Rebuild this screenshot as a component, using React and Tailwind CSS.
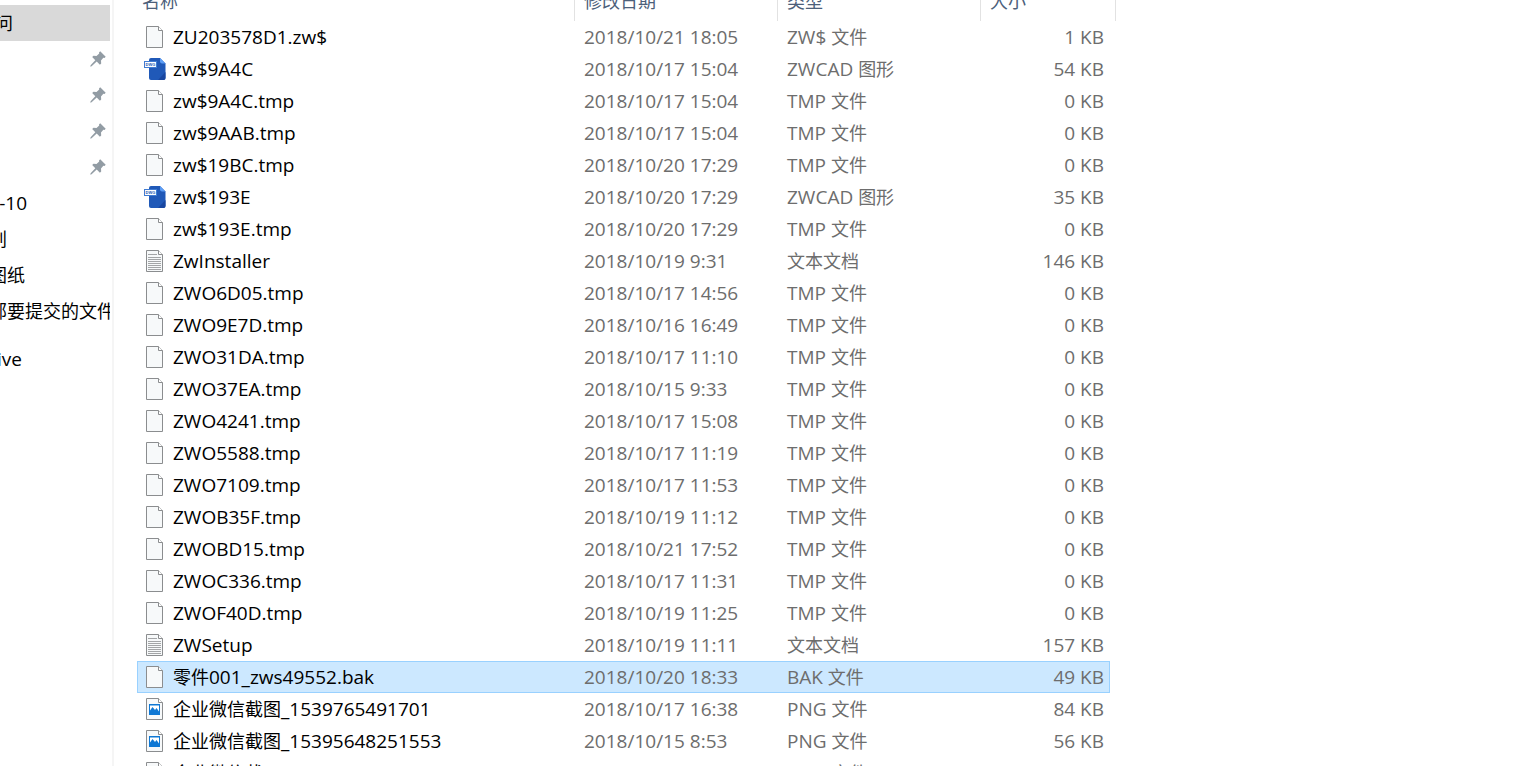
import React from "react";

const pinned = [1, 2, 3, 4];

const folders = [
  { text: "-10", width: "w-[27px]" },
  { text: "划", width: "w-[7px]" },
  { text: "图纸", width: "w-[25px]" },
  { text: "部要提交的文件", width: "w-[115px]" },
];

const files = [
  ["blank", "ZU203578D1.zw$", "2018/10/21 18:05", "ZW$ 文件", "1 KB"],
  ["dwg", "zw$9A4C", "2018/10/17 15:04", "ZWCAD 图形", "54 KB"],
  ["blank", "zw$9A4C.tmp", "2018/10/17 15:04", "TMP 文件", "0 KB"],
  ["blank", "zw$9AAB.tmp", "2018/10/17 15:04", "TMP 文件", "0 KB"],
  ["blank", "zw$19BC.tmp", "2018/10/20 17:29", "TMP 文件", "0 KB"],
  ["dwg", "zw$193E", "2018/10/20 17:29", "ZWCAD 图形", "35 KB"],
  ["blank", "zw$193E.tmp", "2018/10/20 17:29", "TMP 文件", "0 KB"],
  ["text", "ZwInstaller", "2018/10/19 9:31", "文本文档", "146 KB"],
  ["blank", "ZWO6D05.tmp", "2018/10/17 14:56", "TMP 文件", "0 KB"],
  ["blank", "ZWO9E7D.tmp", "2018/10/16 16:49", "TMP 文件", "0 KB"],
  ["blank", "ZWO31DA.tmp", "2018/10/17 11:10", "TMP 文件", "0 KB"],
  ["blank", "ZWO37EA.tmp", "2018/10/15 9:33", "TMP 文件", "0 KB"],
  ["blank", "ZWO4241.tmp", "2018/10/17 15:08", "TMP 文件", "0 KB"],
  ["blank", "ZWO5588.tmp", "2018/10/17 11:19", "TMP 文件", "0 KB"],
  ["blank", "ZWO7109.tmp", "2018/10/17 11:53", "TMP 文件", "0 KB"],
  ["blank", "ZWOB35F.tmp", "2018/10/19 11:12", "TMP 文件", "0 KB"],
  ["blank", "ZWOBD15.tmp", "2018/10/21 17:52", "TMP 文件", "0 KB"],
  ["blank", "ZWOC336.tmp", "2018/10/17 11:31", "TMP 文件", "0 KB"],
  ["blank", "ZWOF40D.tmp", "2018/10/19 11:25", "TMP 文件", "0 KB"],
  ["text", "ZWSetup", "2018/10/19 11:11", "文本文档", "157 KB"],
  ["blank", "零件001_zws49552.bak", "2018/10/20 18:33", "BAK 文件", "49 KB"],
  ["image", "企业微信截图_1539765491701", "2018/10/17 16:38", "PNG 文件", "84 KB"],
  ["image", "企业微信截图_15395648251553", "2018/10/15 8:53", "PNG 文件", "56 KB"],
  ["image", "企业微信截", "", "PNG 文件", ""],
];

const selectedName = "零件001_zws49552.bak";

// Chinese runs are set one size below the Latin ones.
function Label({ children }) {
  return children.split(/([\u4e00-\u9fff]+)/).map((part, i) =>
    /[\u4e00-\u9fff]/.test(part) ? (
      <span key={i} className="text-[18px]">{part}</span>
    ) : (
      part
    )
  );
}

function PinIcon() {
  return (
    <svg className="size-4 shrink-0" viewBox="0 0 16 16" fill="#929ca4" aria-hidden="true">
      <path d="M10.200 0.300 15.700 5.800 14.500 7 13.300 6.800 11 9.400 11.200 12.400 9.900 13.700 6.700 10.500 1.600 15.300 0.300 15.700 0.600 14.300 5.300 9.200 2.200 6 3.500 4.700 6.500 4.900 9.200 2.600 9 1.500Z" />
    </svg>
  );
}

function FileIcon({ kind }) {
  if (kind === "dwg") {
    return (
      <svg className="h-6 w-[22px] shrink-0" viewBox="0 0 22 24" aria-hidden="true">
        <path d="M7 1h9l5.500 5.500V21a2 2 0 0 1-2 2H7a2 2 0 0 1-2-2V3a2 2 0 0 1 2-2Z" fill="#2059b8" />
        <path d="M14 23 21.500 15v6a2 2 0 0 1-2 2Z" fill="#1846a0" />
        <path d="M16 1v3.500a2 2 0 0 0 2 2h3.500Z" fill="#5c9df5" />
        <rect x="0.500" y="4.500" width="12" height="6" fill="#fff" stroke="#3f7bd2" />
        <text x="6.500" y="9" textAnchor="middle" fontSize="4" fontWeight="700" fill="#2059b8" fontFamily="Liberation Sans, sans-serif">DWG</text>
      </svg>
    );
  }
  return (
    <svg className="h-6 w-[22px] shrink-0" viewBox="0 0 22 24" aria-hidden="true">
      <path d="M2.500 1.500h12l4 4v17h-16Z" fill="#f7f9fa" stroke="#8b8d8f" />
      <path d="M14.500 1.500v4h4" fill="#fff" stroke="#8b8d8f" />
      {kind === "text" && (
        <path d="M4 5.500h9M4 8.500h13M4 10.500h13M4 12.500h13M4 14.500h13M4 16.500h13M4 18.500h13M4 20.500h13" stroke="#a3a5a7" />
      )}
      {kind === "image" && (
        <>
          <rect x="5" y="7" width="11" height="11" fill="#0f78d4" />
          <path d="M6 8.500h9v6l-2.500-3.500-1.500 2-2.500-3L6 13.500Z" fill="#fff" />
        </>
      )}
    </svg>
  );
}

function SideItem({ text, width }) {
  return (
    <a href="#" className="flex h-9 items-center">
      <span className={`flex shrink-0 justify-end overflow-hidden whitespace-nowrap ${width}`}>
        <span className="shrink-0"><Label>{text}</Label></span>
      </span>
    </a>
  );
}

function HeaderCell({ children, pad, span }) {
  return (
    <th colSpan={span} className={`h-9 border-r border-[#e2e2e2] p-0 pb-1 text-left font-normal text-[#4c607a] ${pad}`}>
      <button type="button" className="block"><Label>{children}</Label></button>
    </th>
  );
}

function FileRow({ file }) {
  const [kind, name, date, type, size] = file;
  const selected = name === selectedName;
  const cell = selected ? "border-y border-[#99d1ff] bg-[#cce8ff]" : "";
  return (
    <tr className="h-8" aria-selected={selected}>
      <td className={`p-0 text-black ${cell} ${selected ? "border-l pl-[6px]" : "pl-[7px]"}`}>
        <div className="flex items-center gap-[7px]">
          <FileIcon kind={kind} />
          <span><Label>{name}</Label></span>
        </div>
      </td>
      <td className={`p-0 pl-[9px] ${cell}`}><Label>{date}</Label></td>
      <td className={`p-0 pl-[9px] ${cell}`}><Label>{type}</Label></td>
      <td className={`p-0 text-right ${cell} ${selected ? "border-r pr-[5px]" : "pr-[6px]"}`}>{size}</td>
      <td className="p-0" />
    </tr>
  );
}

export default function App() {
  return (
    <div className="flex h-screen overflow-hidden bg-white font-['Open_Sans','Noto_Sans_CJK_SC',sans-serif] text-[19px] leading-[30px] text-[#6d6d6d]">
      <nav className="w-[114px] shrink-0 border-r-2 border-[#f5f5f5] pt-[5px] text-black">
        <div className="w-[110px] overflow-hidden">
          <div className="bg-[#d9d9d9]">
            <SideItem text="问" width="w-[13px]" />
          </div>
          {pinned.map((n) => (
            <div key={n} className="flex h-9 items-center justify-end pr-1">
              <PinIcon />
            </div>
          ))}
          {folders.map((f) => (
            <SideItem key={f.text} {...f} />
          ))}
          <div className="pt-3">
            <SideItem text="ive" width="w-[22px]" />
          </div>
        </div>
      </nav>
      <main className="-mt-[15px] min-w-0 grow pl-[23px]">
        <table className="w-[979px] table-fixed border-separate border-spacing-0 whitespace-nowrap">
          <colgroup>
            <col className="w-[438px]" />
            <col className="w-[203px]" />
            <col className="w-[203px]" />
            <col className="w-[129px]" />
            <col className="w-[6px]" />
          </colgroup>
          <thead>
            <tr>
              <HeaderCell pad="pl-[5px]">名称</HeaderCell>
              <HeaderCell pad="pl-[9px]">修改日期</HeaderCell>
              <HeaderCell pad="pl-[9px]">类型</HeaderCell>
              <HeaderCell pad="pl-[9px]" span={2}>大小</HeaderCell>
            </tr>
          </thead>
          <tbody>
            {files.map((f) => (
              <FileRow key={f[1]} file={f} />
            ))}
          </tbody>
        </table>
      </main>
    </div>
  );
}
